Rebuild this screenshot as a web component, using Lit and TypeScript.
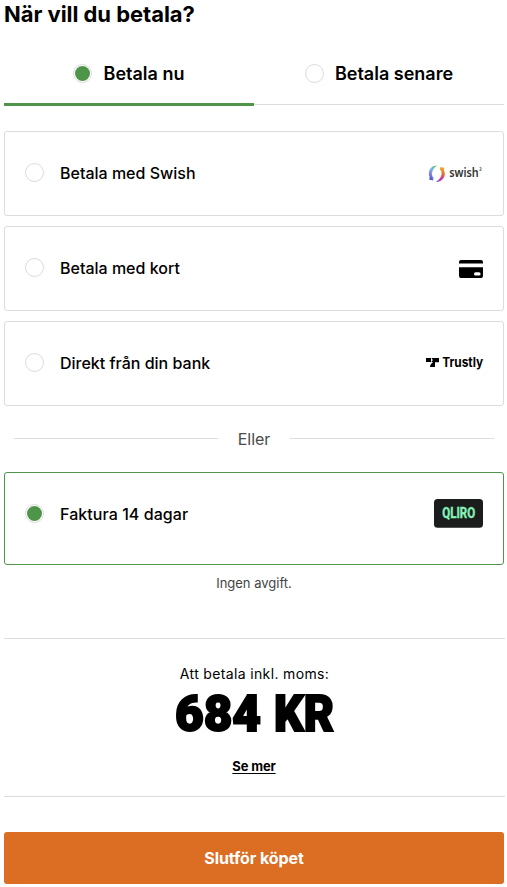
import { LitElement, html, css, svg } from "lit";
import { customElement, property, state } from "lit/decorators.js";
import { classMap } from "lit/directives/class-map.js";

const swishLogo = html`<svg width="55" height="18" viewBox="0 0 55 18">
  <defs>
    <linearGradient id="sw-l" x1="0.8" y1="0" x2="0.2" y2="1">
      <stop offset="0" stop-color="#6fc05a" />
      <stop offset="0.35" stop-color="#66bfd8" />
      <stop offset="0.65" stop-color="#8f86e6" />
      <stop offset="1" stop-color="#3545cc" />
    </linearGradient>
    <linearGradient id="sw-r" x1="0.3" y1="0" x2="0.3" y2="1">
      <stop offset="0" stop-color="#f0b02c" />
      <stop offset="0.45" stop-color="#ea7232" />
      <stop offset="0.75" stop-color="#d0408d" />
      <stop offset="1" stop-color="#7f46d8" />
    </linearGradient>
  </defs>
  <path d="M9 .600C4.500.500.900 4.100.900 8.500c0 1.400.3 2.500.8 3.600L1.200 14.600 5 15.400 5.600 12.200 4.700 11.900C3.100 8.500 4.600 3.500 9 .600Z" fill="url(#sw-l)" />
  <path d="M8 16.900c4.800.3 8.800-3.400 8.800-8.100 0-1.400-.3-2.600-.9-3.700L16.200 2.800 12.400 1.900 11.800 4.900 12.900 5.300C14.700 8.800 13 13.800 8 16.900Z" fill="url(#sw-r)" />
  <text class="swish" x="21.200" y="12" textLength="29.500" lengthAdjust="spacingAndGlyphs">swish</text>
  <text class="swish-mark" x="51.200" y="8.500">²</text>
</svg>`;

const cardLogo = html`<svg width="24" height="18" viewBox="0 0 24 18">
  <path d="M2 0h20a2 2 0 0 1 2 2v1.600H0V2a2 2 0 0 1 2-2ZM0 7.200h24V16a2 2 0 0 1-2 2H2a2 2 0 0 1-2-2Z" fill="#000" />
  <rect x="15" y="12.200" width="6.600" height="3.400" rx="1.700" fill="#fff" />
</svg>`;

const trustlyLogo = html`<svg width="58" height="20" viewBox="0 0 58 20">
  <path d="M1 4h5v4H1ZM6.400 4H14v4.300H10v4.700H5C5.100 10.800 6.200 9.600 8.200 8.300L6.400 8 7.800 6.100Z" fill="#000" />
  <text class="trustly" x="17.200" y="13" textLength="41" lengthAdjust="spacingAndGlyphs">Trustly</text>
</svg>`;

const qliroLogo = html`<svg width="49" height="31" viewBox="0 0 49 31">
  <rect width="49" height="28.700" rx="3.500" fill="#1a1d1c" />
  <text class="qliro" x="8.200" y="18.700" textLength="33" lengthAdjust="spacingAndGlyphs">QLIRO</text>
</svg>`;

@customElement("radio-dot")
export class RadioDot extends LitElement {
  @property({ type: Boolean }) checked = false;

  static styles = css`
    :host { display: block; flex: none; width: 19px; height: 19px; }
    .ring {
      box-sizing: border-box; width: 19px; height: 19px; padding: 1px;
      border: 1px solid #dcdcdc; border-radius: 50%; background: #fff;
    }
    .fill { width: 15px; height: 15px; border-radius: 50%; background: #4f9549; }
  `;

  render() {
    return html`<div class="ring">${this.checked ? html`<div class="fill"></div>` : ""}</div>`;
  }
}

@customElement("app-root")
export class AppRoot extends LitElement {
  @state() private when = "nu";
  @state() private method = "faktura";

  static styles = css`
    :host {
      display: block; box-sizing: border-box; height: 887px; padding: 0 3px 0 4px;
      background: #fff; color: #000; font-family: Inter, "Liberation Sans", sans-serif;
      overflow: hidden;
    }
    * { box-sizing: border-box; }
    svg { overflow: visible; }
    .title { margin: 0; height: 43px; line-height: 28px; font-size: 22px; font-weight: 700; letter-spacing: -0.05px; white-space: nowrap; }
    .tabs { display: grid; grid-template-columns: 250px 250px; height: 63px; }
    .tab {
      display: flex; justify-content: center; gap: 11px; padding-top: 21px;
      height: 62px; border-bottom: 1px solid #dcdcdc;
      font-size: 18px; font-weight: 600; line-height: 20px; white-space: nowrap; cursor: pointer;
    }
    .tab.active { height: 63px; gap: 12px; padding-right: 1px; border-bottom: 3px solid #4f9549; }
    .methods { display: flex; flex-direction: column; gap: 10px; margin-top: 25px; width: 500px; }
    .method {
      display: flex; align-items: center; height: 85px; width: 500px; padding: 0 20px;
      border: 1px solid #dcdcdc; border-radius: 3px; cursor: pointer;
    }
    .method.active { border-color: #4f9549; height: 93px; padding-bottom: 9px; }
    .method radio-dot { margin-top: -2px; }
    .name { flex: 1; margin: 0 0 2px 16px; font-size: 16px; font-weight: 500; line-height: 20px; white-space: nowrap; }
    .active .name { margin-bottom: 0; letter-spacing: 0.06px; }
    .logo svg { display: block; }
    .divider { display: flex; align-items: center; gap: 20px; height: 66px; width: 500px; padding: 0 10px; color: #4a4a4a; font-size: 16px; }
    .rule { flex: 1; height: 1px; margin-bottom: 2px; background: #dcdcdc; }
    .note { margin-top: 8px; width: 500px; height: 21px; line-height: 21px; text-align: center; font-size: 13px; color: #444; }
    .total {
      display: flex; flex-direction: column; align-items: center; margin-top: 44px; height: 159px; width: 501px;
      border-top: 1px solid #dcdcdc; border-bottom: 1px solid #dcdcdc;
    }
    .caption { margin-top: 25px; height: 21px; line-height: 20px; font-size: 14px; letter-spacing: 0.35px; }
    .amount { display: block; height: 56px; }
    .sum { font: 900 50px Roboto, Inter, sans-serif; stroke: #000; stroke-width: 2px; }
    .more { margin: 16px 1px 0 0; line-height: 18px; font-size: 13px; font-weight: 700; letter-spacing: -0.15px; text-decoration: underline; text-underline-offset: 2px; color: #000; }
    .submit {
      display: block; width: 500px; height: 52px; margin-top: 35px; padding: 0; border: 0; border-radius: 3px;
      background: #dc6e23; color: #fff; font: 700 16px/52px Inter, sans-serif; letter-spacing: -0.08px; cursor: pointer;
    }
    .swish { font: 600 12px "Noto Sans", sans-serif; fill: #333; }
    .swish-mark { font: 600 7px "Open Sans", sans-serif; fill: #444; }
    .trustly { font: 700 13px Inter, sans-serif; }
    .qliro { font: 700 14px Roboto, sans-serif; fill: #86f0b9; stroke: #86f0b9; stroke-width: 0.400px; }
  `;

  private tab(id: string, label: string) {
    const active = this.when === id;
    return html`<div class=${classMap({ tab: true, active })} @click=${() => (this.when = id)}>
      <radio-dot ?checked=${active}></radio-dot><span>${label}</span>
    </div>`;
  }

  private row(id: string, label: string, logo: unknown) {
    const active = this.method === id;
    return html`<div class=${classMap({ method: true, active })} @click=${() => (this.method = id)}>
      <radio-dot ?checked=${active}></radio-dot><span class="name">${label}</span><span class="logo">${logo}</span>
    </div>`;
  }

  render() {
    return html`
      <h1 class="title">När vill du betala?</h1>
      <div class="tabs">${this.tab("nu", "Betala nu")}${this.tab("senare", "Betala senare")}</div>
      <div class="methods">
        ${this.row("swish", "Betala med Swish", swishLogo)}
        ${this.row("kort", "Betala med kort", cardLogo)}
        ${this.row("bank", "Direkt från din bank", trustlyLogo)}
      </div>
      <div class="divider"><div class="rule"></div><span>Eller</span><div class="rule"></div></div>
      ${this.row("faktura", "Faktura 14 dagar", qliroLogo)}
      <div class="note">Ingen avgift.</div>
      <div class="total">
        <div class="caption">Att betala inkl. moms:</div>
        <svg class="amount" width="162" height="56" viewBox="0 0 162 56">
          ${svg`<text class="sum" x="1" y="46" textLength="86" lengthAdjust="spacingAndGlyphs">684</text>
          <text class="sum" x="100" y="46" textLength="60" lengthAdjust="spacingAndGlyphs">KR</text>`}
        </svg>
        <a class="more">Se mer</a>
      </div>
      <button class="submit">Slutför köpet</button>
    `;
  }
}
